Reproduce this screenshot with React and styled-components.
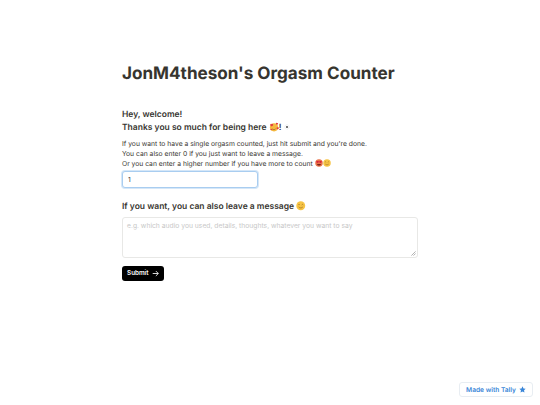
import styled, { createGlobalStyle } from 'styled-components';

const GlobalStyle = createGlobalStyle`
	html, body {
		margin: 0;
		padding: 0;
		background: #fff;
		font-family: Inter, "Liberation Sans", sans-serif;
		text-rendering: geometricPrecision;
	}
`;

const HeartFace = () => (
	<HeartFaceSvg viewBox="0 0 16 16">
		<circle cx="8" cy="8.500" r="6.500" fill="#f5b93f" />
		<path d="M5 11c1.500 1.600 4 1.600 5.500 0" stroke="#8a4a1c" strokeWidth="1" fill="none" />
		<path d="M2 4.500C2 2.800 4 2.400 4.600 3.800 5.400 2.600 7 3.200 6.600 4.800 6.200 6 4.800 6.800 4 7 3 6.600 2 5.600 2 4.500z" fill="#e2383f" />
		<path d="M11 2.500c0-1.200 1.500-1.500 2-.5.6-.8 1.800-.4 1.500.8-.2.8-1.200 1.500-1.800 1.700-.7-.3-1.700-1-1.700-2z" fill="#e2383f" />
		<path d="M12 9.500c0-1.300 1.600-1.600 2.100-.5.7-.9 1.900-.4 1.600.9-.2.9-1.300 1.600-1.900 1.800-.8-.3-1.800-1.100-1.800-2.200z" fill="#e2383f" />
		<circle cx="3.500" cy="12" r="1.300" fill="#e2383f" />
	</HeartFaceSvg>
);

const Sun = () => (
	<SmallSvg viewBox="0 0 10 10">
		<circle cx="5" cy="5" r="1.800" fill="#555" />
		<circle cx="5" cy="5" r="3.600" fill="none" stroke="#cfd3d8" strokeWidth="1" strokeDasharray="1 1" />
	</SmallSvg>
);

const HeartEyes = () => (
	<EmojiSvg viewBox="0 0 16 16">
		<circle cx="8" cy="8" r="7.500" fill="#e8734a" />
		<path d="M2.600 5.400c0-1.600 2-1.900 2.600-.7.7-1.200 2.700-.9 2.500.7-.1 1-1.600 2-2.500 2.400-1-.4-2.600-1.300-2.600-2.400z" fill="#d81f3a" />
		<path d="M8.400 5.400c0-1.600 2-1.900 2.600-.7.7-1.200 2.700-.9 2.500.7-.1 1-1.600 2-2.500 2.400-1-.4-2.600-1.300-2.600-2.400z" fill="#d81f3a" />
		<path d="M4 10h8c-.4 2.200-2 3.200-4 3.200S4.400 12.200 4 10z" fill="#7a2418" />
	</EmojiSvg>
);

const Smile = () => (
	<EmojiSvg viewBox="0 0 16 16">
		<circle cx="8" cy="8" r="7.500" fill="#f6c445" />
		<path d="M3.800 6.500c.7-1 1.900-1 2.600 0M9.600 6.500c.7-1 1.900-1 2.600 0" stroke="#8a5a1c" strokeWidth="1" fill="none" />
		<path d="M4.500 10c1.800 2.200 5.200 2.200 7 0" stroke="#8a5a1c" strokeWidth="1" fill="none" />
	</EmojiSvg>
);

const Grip = () => (
	<GripSvg viewBox="0 0 6 6">
		<path d="M0.500 5.500L5.500 0.500M3 5.500L5.500 3" stroke="#8c8c8c" strokeWidth="0.800" />
	</GripSvg>
);

const App = () => {
	return (
		<Page>
			<GlobalStyle />
			<Form>
				<Title>JonM4theson's Orgasm Counter</Title>
				<Welcome>
					<div>Hey, welcome!</div>
					<div>Thanks you so much for being here <HeartFace />! <Sun /></div>
				</Welcome>
				<Intro>
					<div>If you want to have a single orgasm counted, just hit submit and you're done.</div>
					<div>You can also enter 0 if you just want to leave a message.</div>
					<div>Or you can enter a higher number if you have more to count <HeartEyes /><Smile /></div>
				</Intro>
				<NumberInput type="text" defaultValue="1" />
				<Question>
					If you want, you can also leave a message <QuestionEmoji><Smile /></QuestionEmoji>
				</Question>
				<MessageWrap>
					<Message placeholder="e.g. which audio you used, details, thoughts, whatever you want to say" />
					<Grip />
				</MessageWrap>
				<SubmitButton type="button">
					Submit
					<svg width="7" height="7" viewBox="0 0 10 10" fill="none" stroke="#fff" strokeWidth="1.200">
						<path d="M1 5h8M5.500 1.500L9 5l-3.500 3.500" />
					</svg>
				</SubmitButton>
			</Form>
			<MadeWith>
				Made with Tally
				<svg width="7" height="7" viewBox="0 0 10 10" fill="#3a86d8">
					<path d="M5 .5l1.400 2.900 3.100.4-2.300 2.200.6 3.200L5 7.700 2.200 9.200l.6-3.200L.5 3.800l3.100-.4z" />
				</svg>
			</MadeWith>
		</Page>
	);
};

const Page = styled.div`
	position: relative;
	width: 540px;
	height: 405px;
	overflow: hidden;
	box-sizing: border-box;
	padding: 63px 122px 0;
`;

const Form = styled.div`
	display: flex;
	flex-direction: column;
	align-items: flex-start;
	width: 296px;
`;

const Title = styled.h1`
	margin: 0 0 26px;
	font-size: 17.100px;
	line-height: 21px;
	font-weight: 700;
	color: #37352f;
	white-space: nowrap;
`;

const Welcome = styled.div`
	margin-bottom: 5.500px;
	font-size: 8.500px;
	line-height: 11.500px;
	font-weight: 600;
	color: #37352f;
	white-space: nowrap;

	div {
		height: 11.500px;
	}
`;

const Intro = styled.div`
	margin-bottom: 1.500px;
	font-size: 6.750px;
	line-height: 10.400px;
	color: #37352f;
	white-space: nowrap;

	div {
		height: 10.400px;
	}
`;

const EmojiSvg = styled.svg`
	width: 8px;
	height: 8px;
	vertical-align: -1px;
`;

const HeartFaceSvg = styled.svg`
	width: 10px;
	height: 10px;
	vertical-align: -2px;
`;

const SmallSvg = styled.svg`
	width: 6px;
	height: 6px;
	vertical-align: -0.500px;
`;

const GripSvg = styled.svg`
	position: absolute;
	right: 2px;
	bottom: 2px;
	width: 5px;
	height: 5px;
`;

const NumberInput = styled.input`
	box-sizing: border-box;
	width: 136px;
	height: 17px;
	margin: 0 0 11.500px;
	padding: 0 5px;
	border: 1px solid #a9cdf0;
	border-radius: 3px;
	box-shadow: 0 0 0 1px #d5e7f8;
	outline: none;
	font-family: inherit;
	font-size: 6.750px;
	color: #37352f;
`;

const Question = styled.div`
	margin-bottom: 3px;
	font-size: 8.500px;
	line-height: 14px;
	font-weight: 600;
	color: #37352f;
	white-space: nowrap;
`;

const QuestionEmoji = styled.span`
	svg {
		width: 9.500px;
		height: 9.500px;
		vertical-align: -2px;
	}
`;

const MessageWrap = styled.div`
	position: relative;
	width: 296px;
	height: 41px;
	margin-bottom: 8px;
`;

const Message = styled.textarea`
	display: block;
	box-sizing: border-box;
	width: 100%;
	height: 100%;
	padding: 3px 4px;
	border: 1px solid #e8e8e6;
	border-radius: 3px;
	outline: none;
	resize: none;
	font-family: inherit;
	font-size: 6.750px;
	line-height: 9px;

	&::placeholder {
		color: #c8c8c8;
	}
`;

const SubmitButton = styled.button`
	display: flex;
	align-items: center;
	justify-content: center;
	gap: 3.500px;
	width: 42px;
	height: 15px;
	padding: 0;
	border: none;
	border-radius: 3px;
	background: #000;
	color: #fff;
	font-family: inherit;
	font-size: 6.300px;
	font-weight: 600;
`;

const MadeWith = styled.div`
	position: absolute;
	right: 7px;
	bottom: 8px;
	display: flex;
	align-items: center;
	gap: 3px;
	height: 15px;
	box-sizing: border-box;
	padding: 0 6px;
	border: 1px solid #e8edf2;
	border-radius: 3px;
	background: #fff;
	color: #3a86d8;
	font-size: 6.600px;
	font-weight: 600;
	white-space: nowrap;
`;

export default App;
